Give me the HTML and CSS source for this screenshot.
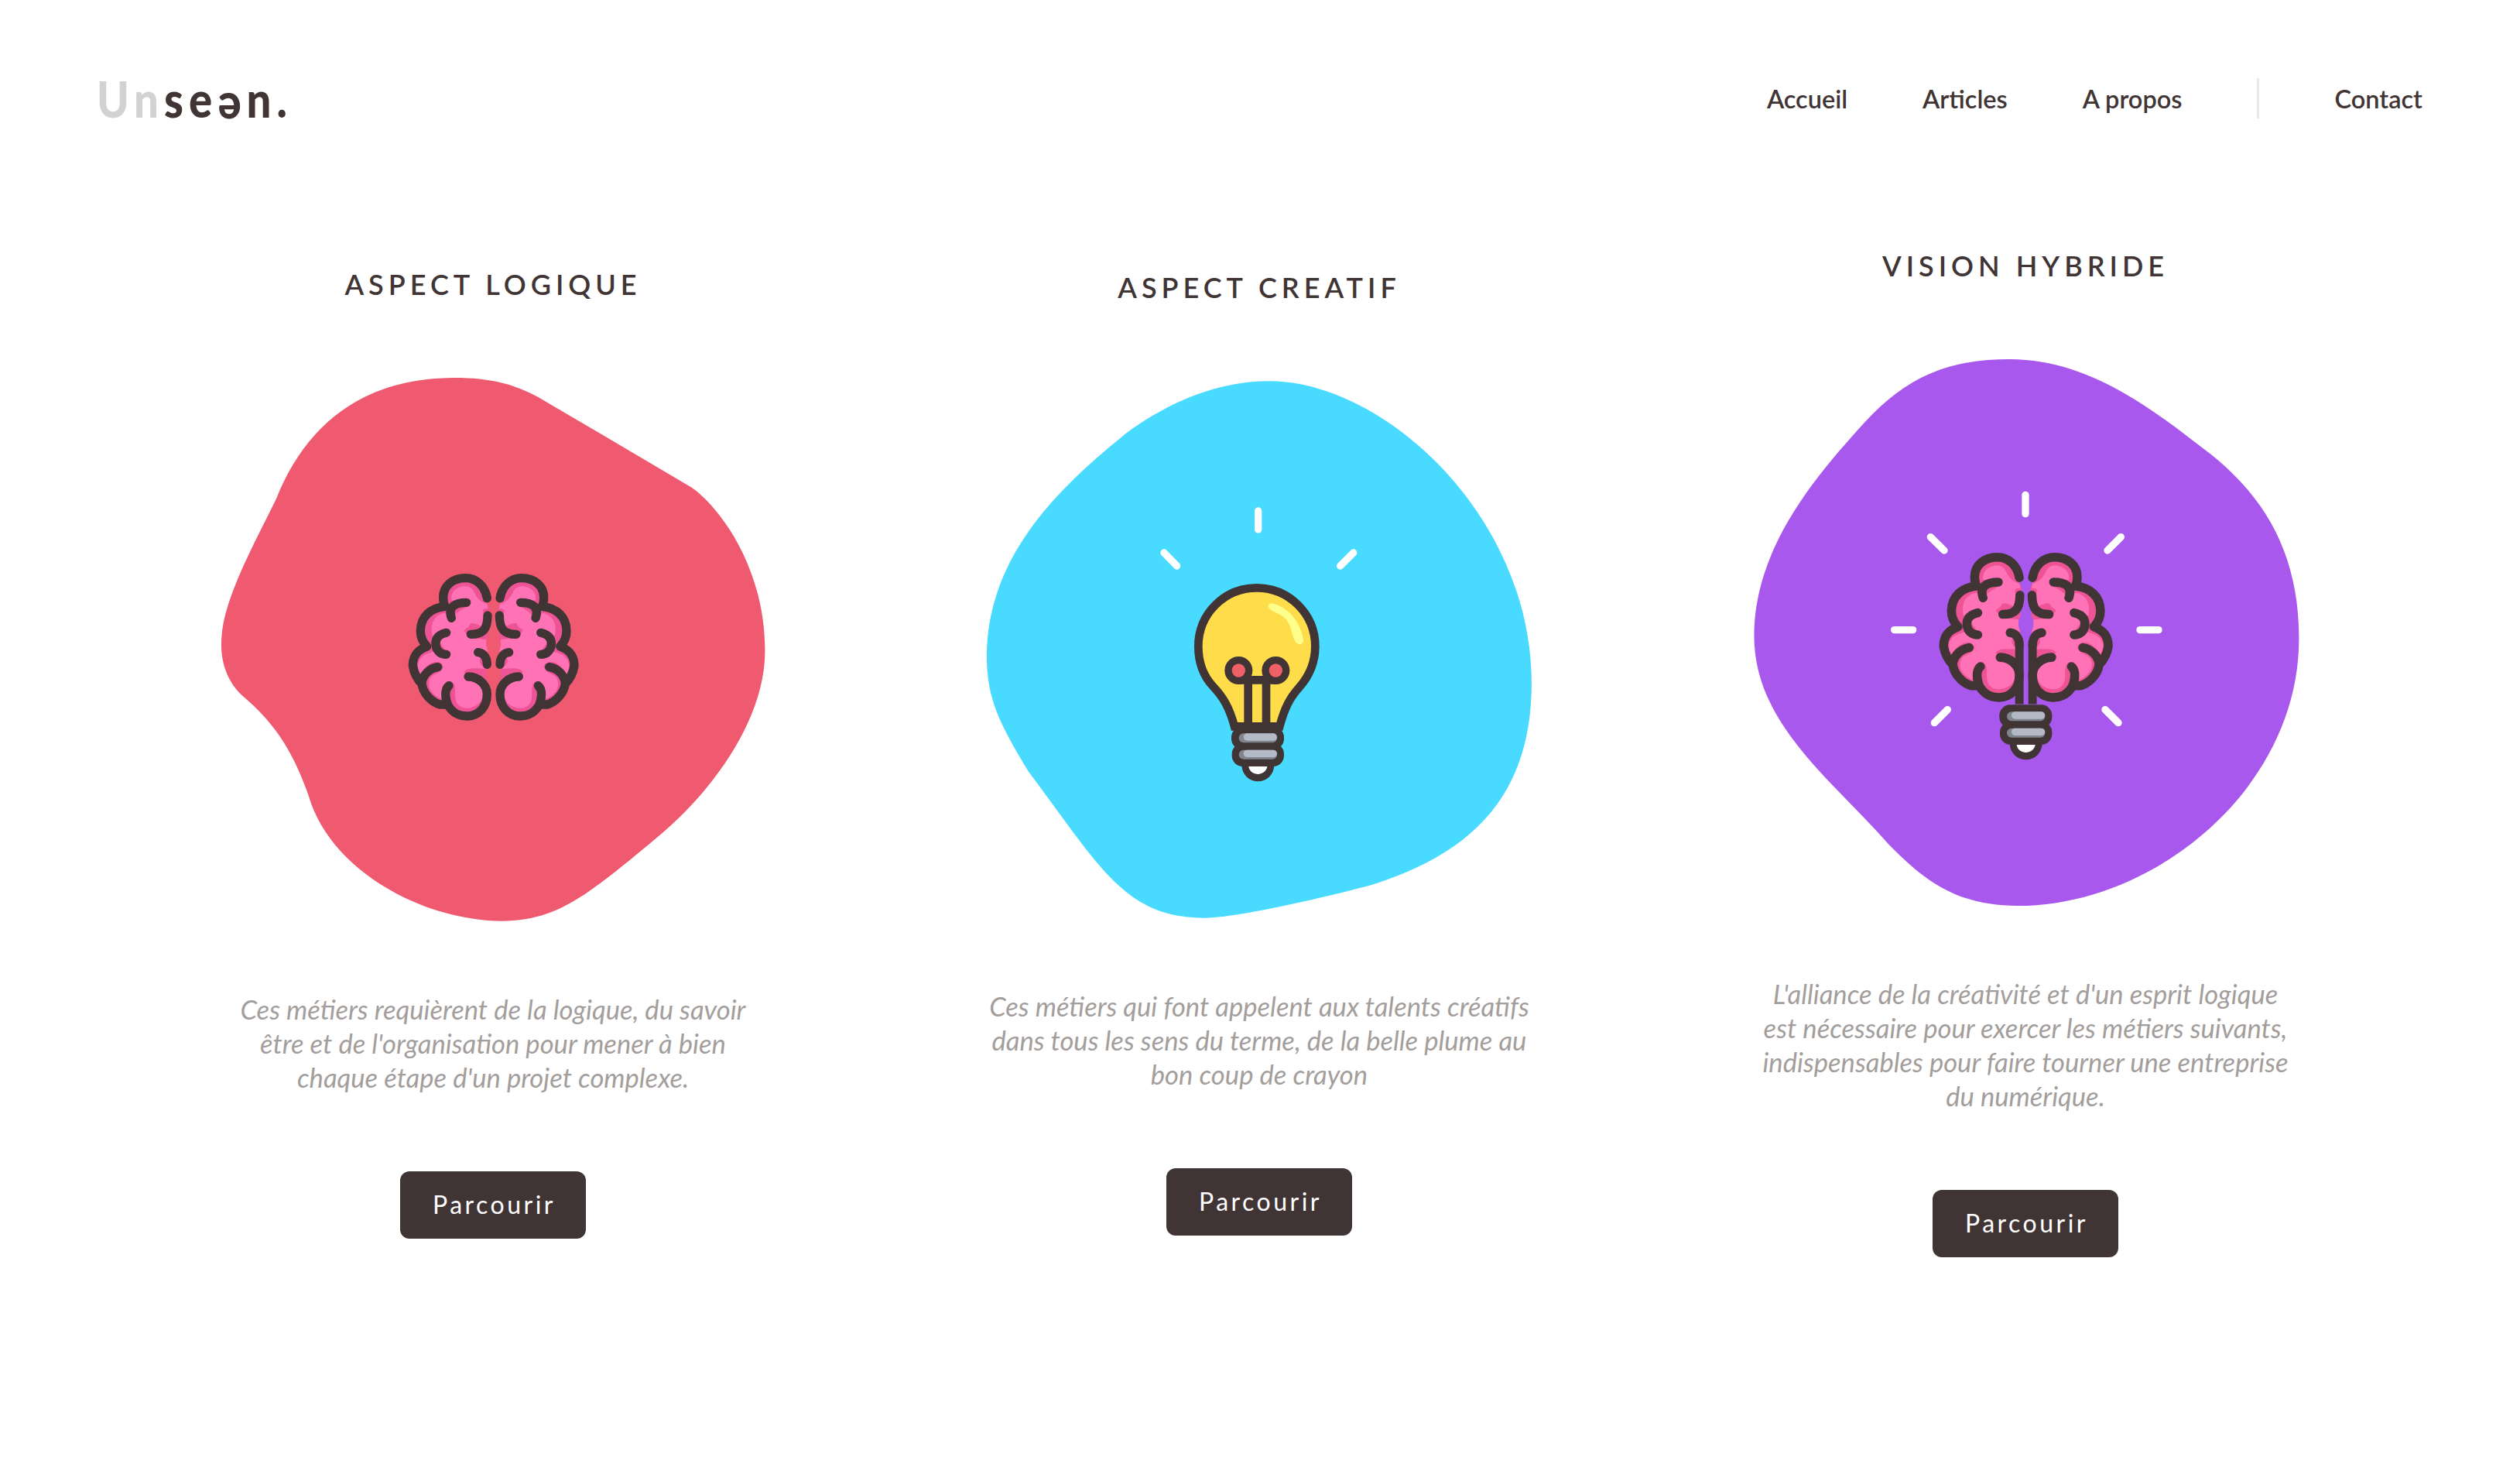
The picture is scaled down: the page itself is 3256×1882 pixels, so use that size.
FILE: index.html
```html
<!DOCTYPE html>
<html lang="fr">
<head>
<meta charset="UTF-8">
<meta name="viewport" content="width=device-width, initial-scale=1.0">
<title>Unseen</title>
<link rel="stylesheet" href="styles.css">
</head>
<body>
<header class="site-header">
    <a class="logo" href="#"><span class="logo-light">Un</span>se<span class="logo-flip">e</span>n.</a>
    <nav class="nav">
        <a href="#">Accueil</a>
        <a href="#">Articles</a>
        <a href="#">A propos</a>
        <span class="nav-sep"></span>
        <a href="#">Contact</a>
    </nav>
</header>

<main class="columns">
    <section class="col col-logic">
        <h2>ASPECT LOGIQUE</h2>
        <svg class="blob" viewBox="253 473 768 739">
            <defs>
                <g id="brain-half">
                    <path fill="#ee5495" d="M388 150C380 100 345 80 305 80C255 80 218 110 218 155C218 165 220 180 225 190C170 195 130 230 130 285C130 310 140 330 155 345C115 360 100 385 100 420C105 450 120 475 135 490C140 525 170 560 205 570L235 575C255 605 280 615 310 615C355 615 388 580 388 530L388 470C380 450 382 440 392 425C398 400 395 380 390 360C380 340 382 325 392 305L392 225C400 205 398 195 388 178Z"/>
                    <path fill="#ff72b6" d="M250 150C255 115 315 95 335 130C345 150 355 172 388 180L392 200C370 195 365 210 378 222C388 240 385 262 370 268C350 262 335 250 322 258C318 272 305 275 298 283L320 312L386 318C382 335 385 350 392 365L365 355C372 375 352 395 362 412C370 422 375 428 380 432C345 430 310 425 298 445L330 470C372 485 378 530 365 555C345 590 272 600 265 545C262 515 270 490 248 480L222 490C205 515 218 530 208 548C175 530 155 505 165 475C170 450 205 455 218 425C215 405 190 400 170 410C155 418 138 435 130 450C115 425 115 395 150 375L180 365C200 395 230 395 245 385L205 330L175 300C165 250 190 220 225 215L250 245C265 210 290 205 310 190L250 165Z"/>
                    <g fill="none" stroke="#403435" stroke-width="34" stroke-linecap="round" stroke-linejoin="round">
                        <path d="M388 158C380 110 345 80 305 80C255 80 218 110 218 155C218 165 220 180 225 190C170 195 130 230 130 285C130 310 140 330 155 345C115 360 100 385 100 420C105 450 120 475 135 490C140 525 170 560 205 570L235 570C255 605 280 615 310 615C355 615 388 580 388 530C388 490 350 462 315 462"/>
                        <path d="M308 175C265 175 235 190 250 235"/>
                        <path d="M390 225C390 280 370 298 325 298"/>
                        <path d="M230 292C195 300 185 320 190 345C195 365 210 376 230 376"/>
                        <path d="M353 368C375 370 388 390 388 415"/>
                        <path d="M197 425C165 430 140 455 135 485"/>
                        <path d="M240 497C225 510 222 530 235 570"/>
                    </g>
                </g>
                <g id="screw">
                    <rect x="333" y="925" width="204" height="90" rx="42" fill="#403435"/>
                    <rect x="335" y="990" width="202" height="90" rx="42" fill="#403435"/>
                    <circle cx="436" cy="1075" r="63" fill="#403435"/>
                    <path fill="#fff" d="M400 1080H472C470 1100 450 1110 436 1110C420 1110 402 1100 400 1080Z"/>
                    <rect x="362" y="952" width="148" height="36" rx="18" fill="#80868f"/>
                    <rect x="380" y="952" width="130" height="28" rx="14" fill="#b3bac6"/>
                    <rect x="362" y="1016" width="148" height="36" rx="18" fill="#80868f"/>
                    <rect x="380" y="1016" width="130" height="28" rx="14" fill="#b3bac6"/>
                </g>
            </defs>
            <path fill="#ef5a70" transform="scale(2.0765)" d="M283 235C310 235 325 241 340 250L430 303C445 313 476 350 476 405C476 450 440 495 410 520C360 562 345 572 312 573C260 572 205 540 192 495C180 460 165 445 150 432C138 420 137 405 138 395C140 370 160 335 172 310C190 265 225 235 283 235Z"/>
            <g transform="translate(500 720) scale(.33333)">
                <use href="#brain-half"/>
                <use href="#brain-half" transform="translate(826 0) scale(-1 1)"/>
            </g>
        </svg>
        <p>Ces métiers requièrent de la logique, du savoir<br>être et de l'organisation pour mener à bien<br>chaque étape d'un projet complexe.</p>
        <a class="btn" href="#">Parcourir</a>
    </section>

    <section class="col col-creative">
        <h2>ASPECT CREATIF</h2>
        <svg class="blob" viewBox="1243 477 768 739">
            <path fill="#48dbff" transform="scale(2.0765)" d="M790 237C860 237 953 320 953 425C953 500 910 532 855 550C830 557 770 571 750 571C700 571 685 540 640 480C622 450 614 435 614 408C614 340 670 295 700 270C730 248 760 237 790 237Z"/>
            <g transform="translate(1480 630) scale(.33333)">
                <g stroke="#fff" stroke-width="28" stroke-linecap="round">
                    <path d="M437 90V162"/>
                    <path d="M72 252L122 303"/>
                    <path d="M806 252L755 303"/>
                </g>
                <path fill="#ffdc4a" stroke="#403435" stroke-width="32" d="M345 925C325 850 300 810 262 770C225 730 205 680 205 615C205 490 305 388 431 388C557 388 658 490 658 615C658 680 635 730 595 775C560 815 540 850 520 925Z"/>
                <path fill="#ffff8c" d="M490 448C545 460 600 510 612 590C612 610 590 612 580 595C565 565 565 530 540 505C520 485 480 480 476 460C476 452 482 448 490 448Z"/>
                <g fill="none" stroke="#403435" stroke-width="32">
                    <path d="M361 745H505"/>
                    <path d="M398 745V925"/>
                    <path d="M468 745V925"/>
                </g>
                <circle cx="361" cy="708" r="40" fill="#ef6067" stroke="#403435" stroke-width="28"/>
                <circle cx="505" cy="708" r="40" fill="#ef6067" stroke="#403435" stroke-width="28"/>
                <use href="#screw"/>
            </g>
        </svg>
        <p>Ces métiers qui font appelent aux talents créatifs<br>dans tous les sens du terme, de la belle plume au<br>bon coup de crayon</p>
        <a class="btn" href="#">Parcourir</a>
    </section>

    <section class="col col-vision">
        <h2>VISION HYBRIDE</h2>
        <svg class="blob" viewBox="2232 448 768 739">
            <path fill="#a858ec" transform="scale(2.0765)" d="M1250 223C1300 223 1340 255 1375 282C1410 310 1430 345 1430 397C1430 490 1340 563 1255 563C1215 563 1195 545 1175 525C1140 485 1091 450 1091 395C1091 340 1130 295 1160 262C1190 229 1220 223 1250 223Z"/>
            <g transform="translate(2420 620) scale(.33333)">
                <g stroke="#fff" stroke-width="28" stroke-linecap="round">
                    <path d="M588 55V128"/>
                    <path d="M220 218L273 270"/>
                    <path d="M958 218L906 270"/>
                    <path d="M80 578H152"/>
                    <path d="M1032 578H1104"/>
                    <path d="M286 887L235 938"/>
                    <path d="M897 887L948 938"/>
                </g>
                <g transform="translate(168.7 215) scale(1.02 1.016)">
                    <use href="#brain-half"/>
                    <use href="#brain-half" transform="translate(826 0) scale(-1 1)"/>
                    <path d="M388 415V640M438 415V640" stroke="#403435" stroke-width="32" fill="none"/>
                </g>
                <use href="#screw" transform="translate(154 -57)"/>
            </g>
        </svg>
        <p>L'alliance de la créativité et d'un esprit logique<br>est nécessaire pour exercer les métiers suivants,<br>indispensables pour faire tourner une entreprise<br>du numérique.</p>
        <a class="btn" href="#">Parcourir</a>
    </section>
</main>
</body>
</html>
```

FILE: styles.css
```css
body {
    margin: 0;
    font-family: Lato, "Open Sans", sans-serif;
    color: #403435;
    background-color: #fff;
}
a {
    color: inherit;
    text-decoration: none;
}
.site-header {
    display: flex;
    justify-content: space-between;
    align-items: center;
    height: 254px;
    padding: 0 126px 0 125px;
    box-sizing: border-box;
}
.logo {
    display: inline-block;
    font-size: 64px;
    font-weight: 900;
    letter-spacing: 8px;
    transform: scaleX(.88);
    transform-origin: left center;
}
.logo-light {
    color: #d2d2d2;
}
.logo-flip {
    display: inline-block;
    letter-spacing: 0;
    margin-right: 8px;
    transform: rotate(180deg);
    transform-origin: 50% 61%;
}
.nav {
    display: flex;
    align-items: center;
    gap: 97px;
    font-size: 32.5px;
    font-weight: 600;
}
.nav-sep {
    width: 3px;
    height: 52px;
    background-color: #e8e8e8;
}
.columns {
    display: grid;
    grid-template-columns: repeat(3, 990px);
    padding-left: 142px;
    padding-top: 64px;
}
.col {
    display: flex;
    flex-direction: column;
    align-items: center;
}
.col h2 {
    margin: 0 0 81px;
    font-size: 36px;
    line-height: 50px;
    font-weight: 600;
    letter-spacing: 6px;
}
.col p {
    margin: 70px 0 99px;
    font-size: 34.6px;
    line-height: 44px;
    font-style: italic;
    font-weight: 400;
    text-align: center;
    color: #a39e9b;
}
.blob {
    display: block;
    width: 768px;
    height: 739px;
}
.col-logic {
    padding-top: 24px;
}
.col-creative {
    padding-top: 28px;
}
.col-creative p {
    margin-top: 62px;
}
.col-vision p {
    margin-top: 74px;
}
.btn {
    display: block;
    width: 240px;
    height: 87px;
    line-height: 85px;
    text-align: center;
    text-indent: 3px;
    font-size: 32px;
    letter-spacing: 3.5px;
    color: #fff;
    background-color: #403435;
    border-radius: 12px;
}
```
